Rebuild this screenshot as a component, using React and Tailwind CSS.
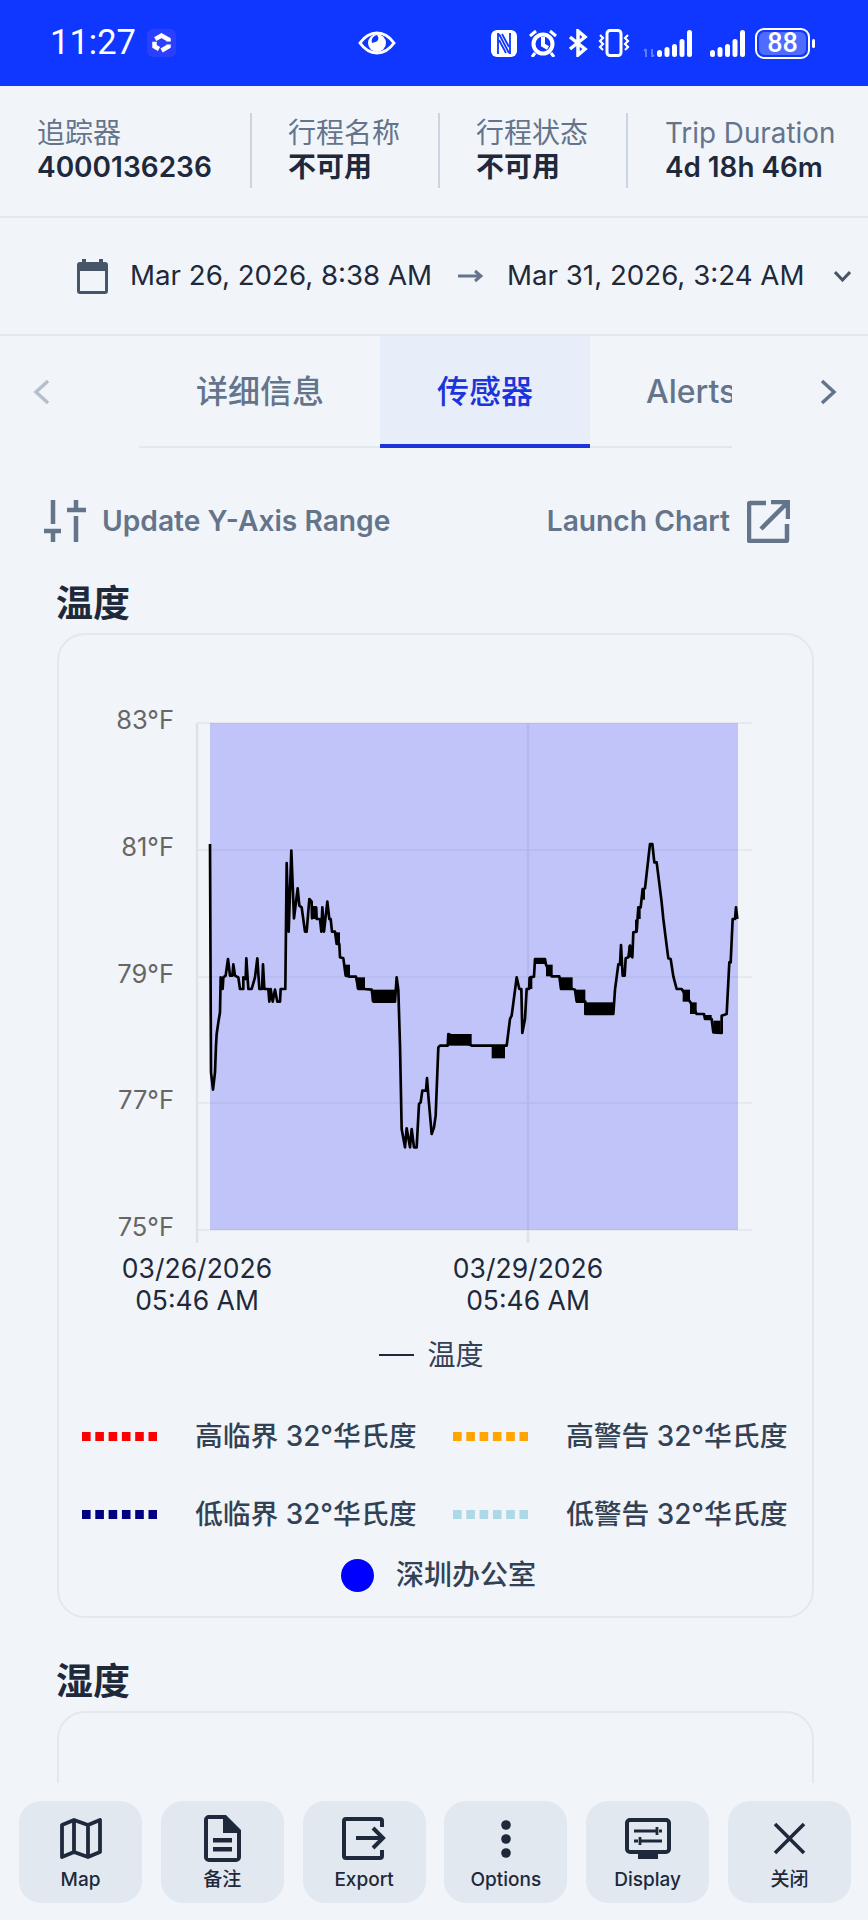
const infoCols = [
  { label: '行程名称', value: '不可用' },
  { label: '行程状态', value: '不可用' },
];

// line points read off the chart, in 3x crop units (see the transforms below)
const lineA = [[90,195],[93,880],[99,932],[105,880],[108,800],[110,765],[115,730],[120,700],[122,595],[128,630],[130,595],[137,590],[144,540],[150,590],[157,590],[160,556],[165,590],[175,595],[180,630],[190,630],[190,595],[197,600],[199,538],[205,630],[215,630],[225,595],[232,538],[238,630],[246,630],[249,556],[253,630],[265,630],[268,668],[272,630],[278,668],[285,632],[292,668],[300,668],[302,630],[316,630],[320,252],[326,458],[334,215],[342,418],[353,328],[358,380],[365,385],[375,458],[380,458],[388,360],[395,368],[396,418],[402,385],[408,385],[410,420],[420,420],[424,458],[427,385],[432,458],[442,368],[448,420],[452,420],[456,458],[465,458],[470,495],[478,495],[480,535],[490,538],[497,590],[510,593],[528,593],[535,630],[552,630],[575,632],[580,668],[645,668],[650,595],[655,632],[660,800],[665,1050],[675,1105],[680,1048],[690,1105],[695,1050],[702,1105],[710,1105],[717,975],[722,970],[727,935],[738,935],[741,897],[745,950],[755,1065],[762,1045],[767,1010],[775,805],[780,800],[803,800],[805,765],[875,800],[900,800]];
const blocksA = [[575,632,73,36],[530,595,25,35],[803,765,72,35],[395,385,17,35],[495,557,15,35],[468,460,12,35]];
const lineB = [[0,800],[35,800],[75,800],[80,800],[90,720],[95,710],[110,595],[118,630],[124,630],[127,762],[135,720],[140,630],[147,630],[150,595],[162,593],[165,540],[195,540],[198,557],[215,592],[238,592],[243,630],[278,630],[285,632],[290,668],[316,668],[316,705],[400,705],[405,632],[415,556],[420,556],[423,498],[428,590],[434,590],[437,538],[445,535],[450,500],[457,535],[460,460],[470,458],[475,385],[482,385],[488,330],[495,328],[510,195],[517,195],[523,250],[530,250],[535,290],[545,370],[550,420],[560,500],[565,538],[572,540],[580,592],[590,630],[605,630],[630,668],[650,705],[672,705],[675,720],[695,720],[700,760],[725,762],[725,710],[740,705],[748,550],[752,550],[758,420],[765,420],[768,385],[772,420]];
const blocksB = [[35,800,40,38],[165,538,30,17],[198,557,20,35],[240,595,38,35],[288,632,28,36],[316,670,84,35],[608,632,22,36],[630,670,20,35],[700,725,22,37],[672,708,23,14],[485,330,10,32],[475,385,7,35],[465,422,7,36],[445,500,12,35],[145,595,12,35]];

const yTicks = [['83°F', 724], ['81°F', 851], ['79°F', 978], ['77°F', 1104], ['75°F', 1231]];
const barHeights = [7, 10, 13, 18, 27];

const toPoints = (pts) => pts.map((p) => p.join(',')).join(' ');

function SignalBars({ x0 }) {
  return (
    <g fill="#fff">
      {barHeights.map((h, i) => (
        <rect key={i} x={x0 + i * 7.5} y={27 - h} width="5" height={h} rx="2.500" />
      ))}
    </g>
  );
}

function StatusBar() {
  return (
    <div className="h-[86px] shrink-0 bg-[#0f37ff] text-white flex items-center pl-[50px]">
      <span className="text-[34.5px] w-[97px] font-['Roboto']">11:27</span>
      <svg width="29" height="28" viewBox="0 0 29 28">
        <rect width="29" height="28" rx="6" fill="#2b3fff" />
        <path d="M14.500 6.500l7 4v7l-7 4-7-4v-7z" fill="none" stroke="#fff" strokeWidth="4.500" strokeDasharray="10 3" />
      </svg>
      <svg className="ml-[182px]" width="38" height="24" viewBox="0 0 38 24">
        <path d="M2 12C7 5 12 2 19 2s12 3 17 10c-5 7-10 10-17 10S7 19 2 12z" fill="none" stroke="#fff" strokeWidth="3" />
        <circle cx="19" cy="12" r="9" fill="#fff" />
        <path d="M19 4c-4 1-6 4-5 8 2-1 5-1 6-3 1-2 0-4-1-5z" fill="#0f37ff" />
      </svg>
      <svg className="ml-[95px]" width="26" height="27" viewBox="0 0 26 27">
        <rect width="26" height="27" rx="6" fill="#fff" />
        <path d="M7 3v21M19 3v21" stroke="#0f37ff" strokeWidth="1.800" />
        <path d="M8 4l10 19M8 10l7 13M11 4l7 13" fill="none" stroke="#0f37ff" strokeWidth="1.800" />
      </svg>
      <svg className="ml-[11px]" width="30" height="28" viewBox="0 0 30 28">
        <circle cx="15" cy="15" r="9.500" fill="none" stroke="#fff" strokeWidth="4" />
        <path d="M15 8v8l5 3" fill="none" stroke="#fff" strokeWidth="4" />
        <path d="M2 7l6-5M28 7l-6-5M7 24l-3 4M23 24l3 4" fill="none" stroke="#fff" strokeWidth="3" />
      </svg>
      <svg className="ml-[10px]" width="20" height="28" viewBox="0 0 20 28">
        <path d="M2 8l15 12-7 6V2l7 6L2 20" fill="none" stroke="#fff" strokeWidth="3.500" />
      </svg>
      <svg className="ml-[9px]" width="34" height="28" viewBox="0 0 34 28">
        <rect x="10" y="1.500" width="14" height="25" rx="3" fill="none" stroke="#fff" strokeWidth="3" />
        <path d="M3 6l3 3-3 3 3 3-3 3 3 3M31 6l-3 3 3 3-3 3 3 3-3 3" fill="none" stroke="#fff" strokeWidth="2.200" />
      </svg>
      <svg className="ml-[12px]" width="49" height="27" viewBox="0 0 49 27">
        <path d="M3 27v-8M1 21l2-2M9 19v8M11 25l-2 2" stroke="#5f7bff" strokeWidth="2" fill="none" />
        <SignalBars x0={14} />
      </svg>
      <svg className="ml-[17px]" width="36" height="27" viewBox="0 0 36 27">
        <SignalBars x0={1} />
      </svg>
      <div className="ml-[10px] w-[55px] h-[31px] rounded-[9px] border-2 border-white p-[2px] flex">
        <div className="flex-1 rounded-[6px] bg-[#4f6cff] flex items-center justify-center text-[27px] leading-none font-medium font-['Roboto']">88</div>
      </div>
      <div className="ml-[2px] w-[3px] h-[9px] rounded-full bg-white" />
    </div>
  );
}

function TripInfo() {
  return (
    <div className="h-[132px] shrink-0 border-b-2 border-[#e2e8f0] flex items-start pt-[27px] pl-[37px]">
      <div className="w-[213px] h-[75px] pt-[3px]">
        <div className="text-[28px] leading-[34px] text-[#64748b]">追踪器</div>
        <div className="text-[28px] leading-[34px] font-semibold text-[#1e293b]">4000136236</div>
      </div>
      {infoCols.map((col) => (
        <div key={col.label} className="w-[188px] h-[75px] pt-[3px] border-l-2 border-[#cbd5e1] pl-[36px]">
          <div className="text-[28px] leading-[34px] text-[#64748b]">{col.label}</div>
          <div className="text-[28px] leading-[34px] font-semibold text-[#1e293b]">{col.value}</div>
        </div>
      ))}
      <div className="h-[75px] pt-[3px] border-l-2 border-[#cbd5e1] pl-[37px]">
        <div className="text-[27.8px] leading-[34px] text-[#64748b]">Trip Duration</div>
        <div className="text-[27.8px] leading-[34px] font-semibold text-[#1e293b]">4d 18h 46m</div>
      </div>
    </div>
  );
}

function DateRange() {
  return (
    <div className="h-[118px] shrink-0 border-b-2 border-[#e2e8f0] flex items-center pl-[77px] text-[27.7px] text-[#1e293b]">
      <svg width="31" height="35" viewBox="0 0 31 35" fill="#475569">
        <path fillRule="evenodd" d="M5 0h4v3h13V0h4v3h2a3 3 0 0 1 3 3v26a3 3 0 0 1-3 3H3a3 3 0 0 1-3-3V6a3 3 0 0 1 3-3h2zM3 12v20h25V12z" />
      </svg>
      <span className="ml-[22px] w-[303px] whitespace-nowrap">Mar 26, 2026, 8:38 AM</span>
      <svg className="ml-[25px]" width="25" height="14" viewBox="0 0 25 14" fill="none" stroke="#64748b" strokeWidth="3">
        <path d="M0 7h23M17 2l6 5-6 5" />
      </svg>
      <span className="ml-[24px] w-[298px] whitespace-nowrap">Mar 31, 2026, 3:24 AM</span>
      <svg className="ml-[29px]" width="17" height="11" viewBox="0 0 17 11" fill="none" stroke="#475569" strokeWidth="3">
        <path d="M1 1l7.500 8L16 1" />
      </svg>
    </div>
  );
}

function Tabs() {
  return (
    <div className="h-[112px] shrink-0 flex items-start">
      <svg className="ml-[33px] mt-[43px]" width="17" height="26" viewBox="0 0 17 26" fill="none" stroke="#b6bfcc" strokeWidth="3.500">
        <path d="M15 2L3 13l12 11" />
      </svg>
      <div className="ml-[89px] w-[593px] h-[112px] flex overflow-hidden text-[32px] leading-[40px] font-medium">
        <div className="w-[241px] h-[112px] shrink-0 border-b-2 border-[#e2e8f0] pl-[57px] pt-[36px] text-[#64748b]">详细信息</div>
        <div className="w-[210px] h-[112px] shrink-0 bg-[#e8edfa] border-b-4 border-[#1d35d8] text-center pt-[36px] text-[#1d35d8]">传感器</div>
        <div className="flex-1 h-[112px] border-b-2 border-[#e2e8f0] pl-[56px] pt-[36px] text-[#64748b] whitespace-nowrap">Alerts</div>
      </div>
      <svg className="ml-[88px] mt-[43px]" width="17" height="26" viewBox="0 0 17 26" fill="none" stroke="#64748b" strokeWidth="3.500">
        <path d="M2 2l12 11L2 24" />
      </svg>
    </div>
  );
}

function ChartToolbar() {
  return (
    <div className="flex items-center justify-between mt-[51px] pl-[44px] pr-[78px] h-[44px] text-[28.2px] font-semibold text-[#64748b]">
      <div className="flex items-center">
        <svg width="42" height="42" viewBox="0 0 42 42" fill="none" stroke="#64748b" strokeWidth="4.500">
          <path d="M9 0v24M9 31v11M0 31h17M32 0v10M23 10h19M32 16v26" />
        </svg>
        <span className="ml-[16px]">Update Y-Axis Range</span>
      </div>
      <div className="flex items-center">
        <span>Launch Chart</span>
        <svg className="ml-[17px]" width="43" height="43" viewBox="0 0 43 43" fill="none" stroke="#64748b" strokeWidth="4.500">
          <path d="M19 3H3a1 1 0 0 0-1 1v36a1 1 0 0 0 1 1h36a1 1 0 0 0 1-1V24M14 29L41 2M24 2h17v17" />
        </svg>
      </div>
    </div>
  );
}

function TempChart() {
  return (
    <svg className="block" width="755" height="690" viewBox="59 636 755 690">
      <rect x="210" y="724" width="528" height="507" fill="#c1c4f9" />
      <g stroke="#1e293b" strokeOpacity="0.05" strokeWidth="2">
        {yTicks.map(([label, y]) => (
          <line key={label} x1="197" x2="752" y1={y} y2={y} />
        ))}
      </g>
      <line x1="197" x2="197" y1="724" y2="1244" stroke="#dfe3e9" strokeWidth="2.500" />
      <line x1="528" x2="528" y1="724" y2="1231" stroke="#b4b8ee" strokeWidth="2.500" />
      <line x1="528" x2="528" y1="1231" y2="1244" stroke="#dfe3e9" strokeWidth="2.500" />
      <g transform="translate(180 780) scale(0.33333)" stroke="#000" fill="none" strokeWidth="8" strokeLinejoin="round">
        <polyline points={toPoints(lineA)} />
        {blocksA.map(([x, y, w, h]) => (
          <rect key={`${x}-${y}`} x={x} y={y} width={w} height={h} fill="#000" stroke="none" />
        ))}
      </g>
      <g transform="translate(480 780) scale(0.33333)" stroke="#000" fill="none" strokeWidth="8" strokeLinejoin="round">
        <polyline points={toPoints(lineB)} />
        {blocksB.map(([x, y, w, h]) => (
          <rect key={`${x}-${y}`} x={x} y={y} width={w} height={h} fill="#000" stroke="none" />
        ))}
      </g>
      <g fontSize="25.500" fill="#666666" textAnchor="end">
        {yTicks.map(([label, y]) => (
          <text key={label} x="174" y={y + 6}>{label}</text>
        ))}
      </g>
      <g fontSize="26.500" fill="#1e293b" textAnchor="middle">
        <text x="197" y="1279">03/26/2026</text>
        <text x="197" y="1311">05:46 AM</text>
        <text x="528" y="1279">03/29/2026</text>
        <text x="528" y="1311">05:46 AM</text>
      </g>
    </svg>
  );
}

function Threshold({ color, label }) {
  return (
    <div className="flex items-center">
      <svg width="75" height="9" viewBox="0 0 75 9">
        <line x1="0" x2="75" y1="4.500" y2="4.500" stroke={color} strokeWidth="9" strokeDasharray="8.600 4.700" />
      </svg>
      <span className="ml-[38px] text-[27.8px] leading-[34px] text-[#334155] font-medium whitespace-nowrap">{label}</span>
    </div>
  );
}

function ChartCard() {
  return (
    <div className="ml-[57px] w-[757px] h-[985px] mt-[7px] border-2 border-[#e2e8f0] rounded-[28px] overflow-hidden">
      <TempChart />
      <div className="flex items-center justify-center h-[30px] -ml-[8px] mt-[15px]">
        <div className="w-[35px] h-[2px] bg-[#1e293b]" />
        <span className="ml-[13px] text-[28px] text-[#334155]">温度</span>
      </div>
      <div className="grid grid-cols-[371px_1fr] pl-[23px] gap-y-[44px] mt-[49px]">
        <Threshold color="#ff0000" label="高临界 32°华氏度" />
        <Threshold color="#ffa500" label="高警告 32°华氏度" />
        <Threshold color="#000080" label="低临界 32°华氏度" />
        <Threshold color="#add8e6" label="低警告 32°华氏度" />
      </div>
      <div className="flex items-center justify-center mt-[23px] ml-[6px]">
        <div className="w-[33px] h-[33px] rounded-full bg-[#0000ff]" />
        <span className="ml-[22px] text-[28px] text-[#334155] font-medium">深圳办公室</span>
      </div>
    </div>
  );
}

const navItems = [
  {
    label: 'Map',
    icon: (
      <svg width="42" height="41" viewBox="0 0 42 41" fill="none" stroke="#1e293b" strokeWidth="3.800" strokeLinejoin="round">
        <path d="M2 7l12-5 14 5 12-5v32l-12 5-14-5-12 5zM14 2v32M28 7v32" />
      </svg>
    ),
  },
  {
    label: '备注',
    icon: (
      <svg width="37" height="47" viewBox="0 0 37 47" fill="#1e293b">
        <path fillRule="evenodd" d="M5 0h17l15 15v27a5 5 0 0 1-5 5H5a5 5 0 0 1-5-5V5a5 5 0 0 1 5-5zm-1 4v39h29V18H19V4z" />
        <rect x="9" y="23" width="19" height="4.500" />
        <rect x="9" y="32" width="19" height="4.500" />
      </svg>
    ),
  },
  {
    label: 'Export',
    icon: (
      <svg width="44" height="43" viewBox="0 0 44 43" fill="none" stroke="#1e293b" strokeWidth="4">
        <path d="M40 10V4a2 2 0 0 0-2-2H4a2 2 0 0 0-2 2v35a2 2 0 0 0 2 2h34a2 2 0 0 0 2-2v-6M14 21h27M31 11l10 10-10 10" />
      </svg>
    ),
  },
  {
    label: 'Options',
    icon: (
      <svg width="10" height="38" viewBox="0 0 10 38" fill="#1e293b">
        <circle cx="5" cy="5" r="4.800" />
        <circle cx="5" cy="19" r="4.800" />
        <circle cx="5" cy="33" r="4.800" />
      </svg>
    ),
  },
  {
    label: 'Display',
    icon: (
      <svg width="46" height="41" viewBox="0 0 46 41" fill="none" stroke="#1e293b" strokeWidth="4">
        <rect x="2" y="2" width="42" height="32" rx="3" />
        <path d="M9 13h22M34 13h3M32 9v8M9 23h4M16 23h21M15 19v8" strokeWidth="2.800" />
        <path d="M13 35h20v6H13z" fill="#1e293b" stroke="none" />
      </svg>
    ),
  },
  {
    label: '关闭',
    icon: (
      <svg width="33" height="33" viewBox="0 0 33 33" fill="none" stroke="#1e293b" strokeWidth="3.600">
        <path d="M2 2l29 29M31 2L2 31" />
      </svg>
    ),
  },
];

function BottomNav() {
  return (
    <div className="h-[137px] shrink-0 flex justify-between pl-[19px] pr-[17px] pt-[18px] bg-[#f1f5f9]">
      {navItems.map((item) => (
        <div key={item.label} className="w-[123px] h-[102px] rounded-[22px] bg-[#e2e8f0] flex flex-col items-center">
          <div className="h-[66px] pt-[9px] flex items-center justify-center">{item.icon}</div>
          <div className="text-[19px] leading-[26px] font-medium text-[#1e293b]">{item.label}</div>
        </div>
      ))}
    </div>
  );
}

export default function App() {
  return (
    <div className="w-[868px] h-[1920px] overflow-hidden flex flex-col bg-[#f1f5f9] font-['Inter','Noto_Sans_CJK_SC',sans-serif]">
      <StatusBar />
      <TripInfo />
      <DateRange />
      <Tabs />
      <div className="flex-1 overflow-hidden">
        <ChartToolbar />
        <h2 className="ml-[56px] mt-[39px] text-[37px] leading-[44px] font-semibold text-[#1e293b]">温度</h2>
        <ChartCard />
        <h2 className="ml-[56px] mt-[42px] text-[37px] leading-[44px] font-semibold text-[#1e293b]">湿度</h2>
        <div className="ml-[57px] w-[757px] mt-[7px] h-[200px] border-2 border-[#e2e8f0] rounded-[28px]" />
      </div>
      <BottomNav />
    </div>
  );
}
